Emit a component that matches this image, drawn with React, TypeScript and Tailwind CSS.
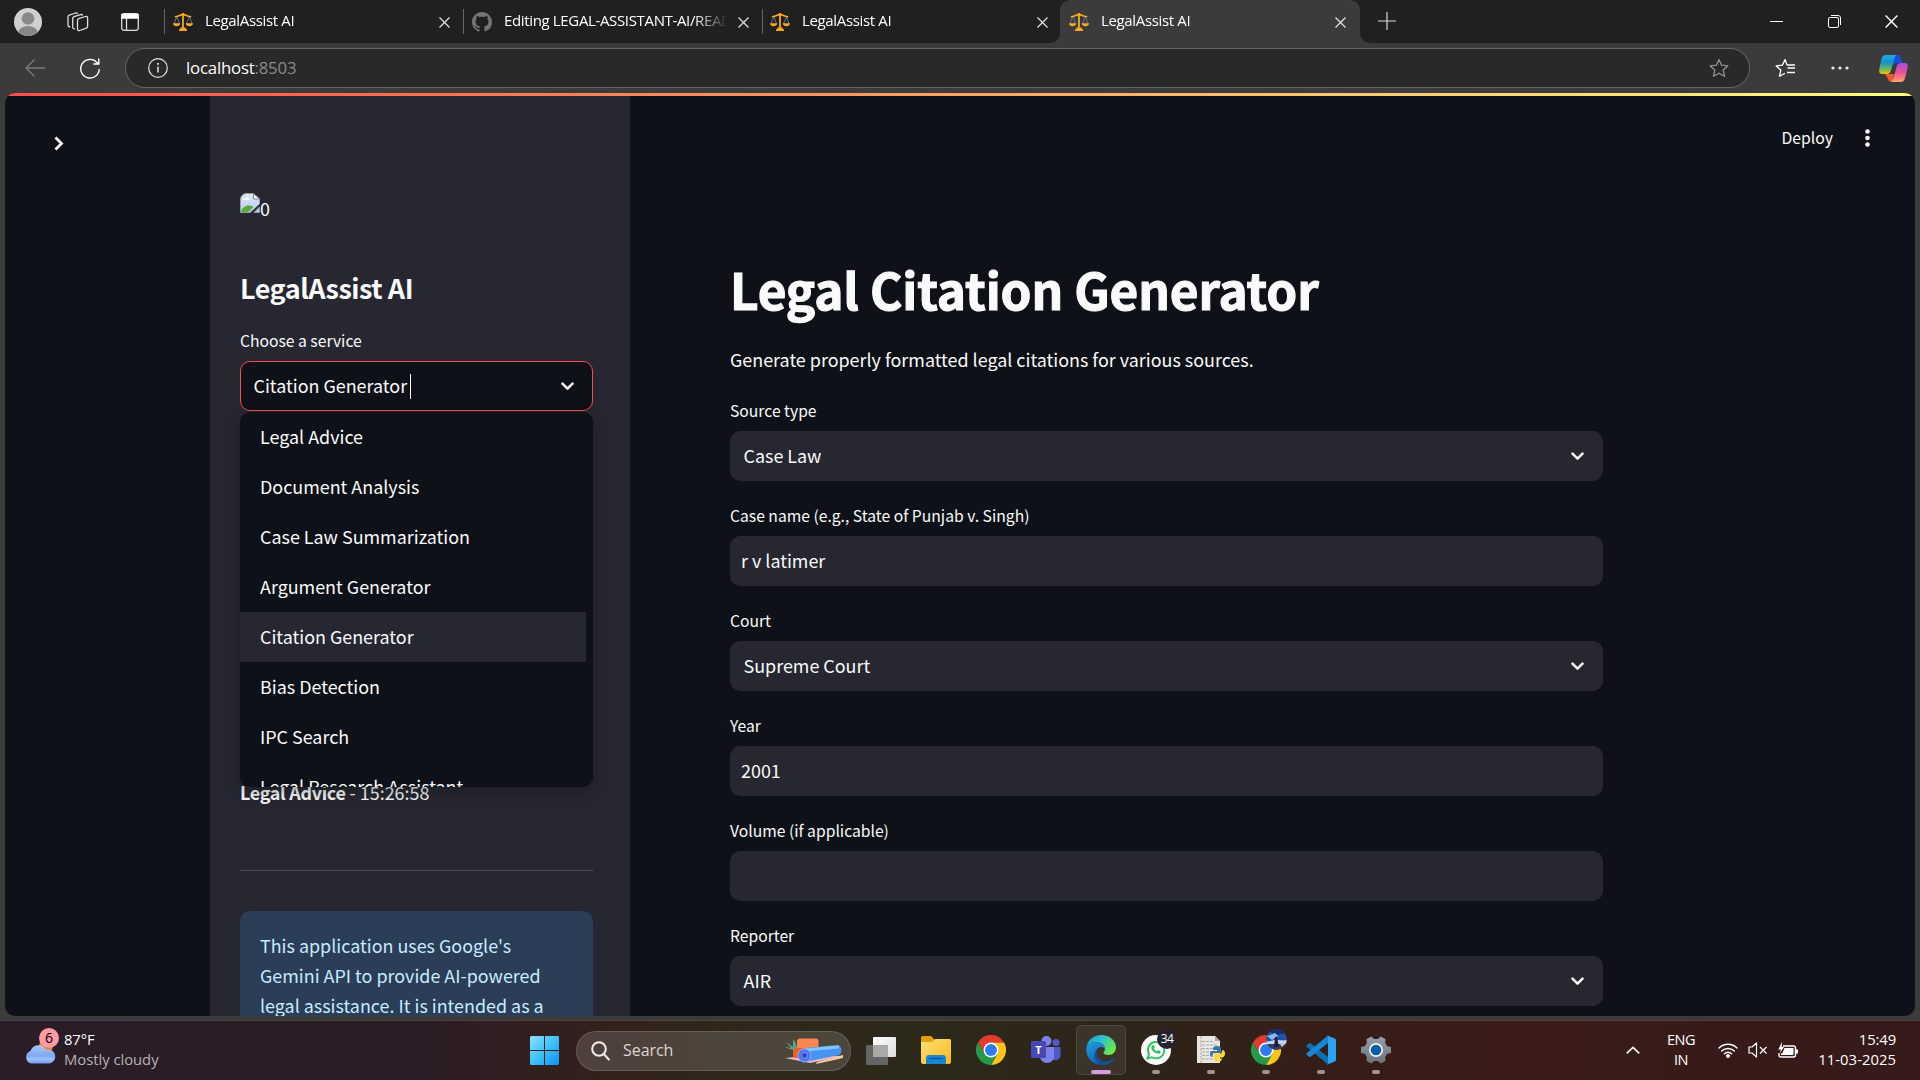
import React from "react";

const ui = "font-['Open_Sans','Noto_Sans',sans-serif]";
const source = "font-['Noto_Sans_CJK_SC','Noto_Sans',sans-serif]";

function Scales() {
  return (
    <svg width="20" height="20" viewBox="0 0 20 20" fill="none" className="shrink-0">
      <path d="M3.5 5 1 12M4 5l2.6 7M16.4 5 13.4 12M16.6 5 19 12" stroke="#5f7683" strokeWidth="1" />
      <path d="M2.5 4.6C5 4.6 7 2.6 10 2.6s5 2 7.5 2" stroke="#f9a825" strokeWidth="1.7" strokeLinecap="round" />
      <path d="M9.1 1.2h1.8v15H9.1z" fill="#f9a825" />
      <circle cx="10" cy="2.6" r="1.5" fill="#f9a825" />
      <path d="M0 11.3h7.2c0 2-1.6 3-3.6 3s-3.6-1-3.6-3ZM12.8 11.3H20c0 2-1.6 3-3.6 3s-3.6-1-3.6-3Z" fill="#f9a825" />
      <path d="M7.4 15.6h5.2l.2 1.6h1.2v1.8H6v-1.8h1.2Z" fill="#f9a825" />
    </svg>
  );
}

function GitHub() {
  return (
    <svg width="20" height="20" viewBox="0 0 16 16" fill="#737373" className="shrink-0">
      <path d="M8 0C3.58 0 0 3.58 0 8c0 3.54 2.29 6.53 5.47 7.59.4.07.55-.17.55-.38 0-.19-.01-.82-.01-1.49-2.01.37-2.53-.49-2.69-.94-.09-.23-.48-.94-.82-1.13-.28-.15-.68-.52-.01-.53.63-.01 1.08.58 1.23.82.72 1.21 1.87.87 2.33.66.07-.52.28-.87.51-1.07-1.78-.2-3.64-.89-3.64-3.95 0-.87.31-1.59.82-2.15-.08-.2-.36-1.02.08-2.12 0 0 .67-.21 2.2.82.64-.18 1.32-.27 2-.27s1.36.09 2 .27c1.53-1.04 2.2-.82 2.2-.82.44 1.1.16 1.92.08 2.12.51.56.82 1.27.82 2.15 0 3.07-1.87 3.75-3.65 3.95.29.25.54.73.54 1.48 0 1.07-.01 1.93-.01 2.2 0 .21.15.46.55.38A8.01 8.01 0 0 0 16 8c0-4.42-3.58-8-8-8Z" />
    </svg>
  );
}

function Cross({ size = 11, color = "#e4e4e4" }: { size?: number; color?: string }) {
  return (
    <svg width={size} height={size} viewBox="0 0 11 11" className="shrink-0">
      <path d="m.5.5 10 10M10.5.5l-10 10" stroke={color} strokeWidth="1.2" />
    </svg>
  );
}

function Tab({ title, icon, active }: { title: string; icon: React.ReactNode; active?: boolean }) {
  return (
    <div className={active ? "relative flex h-full w-[300px] items-center rounded-t-[10px] bg-[#3b3b3b]" : "relative flex h-full w-[299px] items-center"}>
      {!active && <span className="h-[25px] w-px bg-[#666]" />}
      <div className={active ? "flex w-[266px] items-center gap-3 pl-[9px]" : "flex w-[265px] items-center gap-3 pl-2"}>
        {icon}
        <span className="-mt-[3px] w-[224px] overflow-hidden whitespace-nowrap text-[15px] tracking-[-0.350px] text-white [mask-image:linear-gradient(to_right,#000_190px,transparent_224px)]">{title}</span>
      </div>
      <span className={active ? "ml-[9px] mt-px" : "ml-[8.500px] mt-px"}><Cross /></span>
      {active && (
        <>
          <svg className="absolute -left-[10px] bottom-0" width="10" height="10"><path d="M10 0v10H0A10 10 0 0 0 10 0Z" fill="#3b3b3b" /></svg>
          <svg className="absolute -right-[10px] bottom-0" width="10" height="10"><path d="M0 0v10h10A10 10 0 0 1 0 0Z" fill="#3b3b3b" /></svg>
        </>
      )}
    </div>
  );
}

function TabStrip() {
  return (
    <div className="flex h-[43px] shrink-0 items-center bg-[#202020]">
      <div className="flex w-[164px] items-center pl-[14px]">
        <svg width="28" height="28" viewBox="0 0 28 28">
          <defs><clipPath id="avatar"><circle cx="14" cy="14" r="14" /></clipPath></defs>
          <g clipPath="url(#avatar)">
            <path d="M0 0h28v28H0z" fill="#d2d0ce" />
            <circle cx="14" cy="10.500" r="6.200" fill="#8a8886" />
            <ellipse cx="14" cy="25" rx="10" ry="7" fill="#8a8886" />
          </g>
        </svg>
        <svg className="ml-[25px]" width="22" height="20" viewBox="0 0 22 20" fill="none" stroke="#ddd" strokeWidth="1.300">
          <path d="M10.500 8.400c0-.8.400-1.400 1.100-1.700l6.900-2.200c1.300-.4 2.100.2 2.100 1.400v8.400c0 .9-.4 1.500-1.200 1.800l-6.800 2.400c-1.200.4-2.100-.2-2.100-1.400Z" />
          <path d="M8 16.700c-1.400.3-2.300-.3-2.300-1.700V6.500c0-.9.500-1.500 1.300-1.800l6.400-2.100c1.100-.3 1.900 0 2.200.8" />
          <path d="M3.200 14.700C1.700 15 1 14.200 1 13V4.900c0-.9.400-1.500 1.200-1.800L8.600 1c1.100-.3 1.700 0 2.100.7" />
        </svg>
        <svg className="ml-8" width="18" height="18" viewBox="0 0 18 18" fill="none" stroke="#ddd" strokeWidth="1.300">
          <rect x=".7" y=".7" width="16.600" height="16.600" rx="2.500" />
          <path d="M1 1.500h16v3.500H1z" fill="#fff" stroke="#fff" />
          <path d="M5.500 5v12" />
        </svg>
      </div>
      <Tab title="LegalAssist AI" icon={<Scales />} />
      <Tab title="Editing LEGAL-ASSISTANT-AI/README.md" icon={<GitHub />} />
      <Tab title="LegalAssist AI" icon={<span className="-ml-px"><Scales /></span>} />
      <div className="-ml-px h-full"><Tab title="LegalAssist AI" icon={<Scales />} active /></div>
      <svg className="-mt-px ml-[18px]" width="18" height="18" viewBox="0 0 18 18"><path d="M9 0v18M0 9h18" stroke="#d8d8d8" strokeWidth="1.200" /></svg>
      <div className="ml-auto flex items-center gap-11 pr-[22px]">
        <span className="-ml-px mr-px h-px w-[13px] bg-white" />
        <svg width="13" height="13" viewBox="0 0 13 13" fill="none" stroke="#fff"><rect x=".5" y="2.500" width="10" height="10" rx="1.500" /><path d="M3 .5h7c1.500 0 2.500 1 2.500 2.500v7" /></svg>
        <Cross size={13} color="#fff" />
      </div>
    </div>
  );
}

const starPath = "m10 1.500 2.600 5.700 6.200.7-4.600 4.200 1.300 6.200L10 15.200l-5.500 3.100 1.300-6.200L1.200 7.900l6.200-.7Z";

function AddressBar() {
  return (
    <div className="flex h-[50px] shrink-0 items-center bg-[#3b3b3b]">
      <svg className="ml-[25px]" width="20" height="18" viewBox="0 0 20 18" fill="none" stroke="#7c7c7c" strokeWidth="1.300"><path d="M20 9H1M9.500.5 1 9l8.500 8.500" /></svg>
      <svg className="ml-[35px]" width="20" height="21" viewBox="0 0 20 21" fill="none" stroke="#fff" strokeWidth="1.400"><path d="M19.300 11A9.300 9.300 0 1 1 17 4.600L18.300 6M18.800.5V6h-5.500" /></svg>
      <div className="ml-[25px] flex h-10 w-[1625px] items-center rounded-full border border-[#666] bg-[#292929] pl-[22px] pr-5">
        <svg width="20" height="20" viewBox="0 0 20 20" fill="none" stroke="#e2e2e2" strokeWidth="1.200"><circle cx="10" cy="10" r="9.300" /><path d="M10 8.500v6" strokeWidth="1.500" /><path d="M10 5v1.800" strokeWidth="1.800" /></svg>
        <span className="-mt-px ml-[18px] text-[16.800px] tracking-[-0.200px] text-white">localhost<span className="text-[#8b8b8b]">:8503</span></span>
        <svg className="ml-auto" width="20" height="20" viewBox="0 0 20 20" fill="none" stroke="#939393" strokeWidth="1.300" strokeLinejoin="round"><path d={starPath} /></svg>
      </div>
      <svg className="ml-[25px]" width="21" height="20" viewBox="0 0 21 20" fill="none" stroke="#fff" strokeWidth="1.300" strokeLinejoin="round"><path d="M12 7 10 1.500 7.400 7.200l-6.200.7 4.600 4.200-1.300 6.200 5.500-3.100M12 7h2M12.500 10H20M13.500 7H20M12 14.500h8" /></svg>
      <svg className="ml-[35px]" width="18" height="4" viewBox="0 0 18 4" fill="#eee"><circle cx="2" cy="2" r="1.600" /><circle cx="9" cy="2" r="1.600" /><circle cx="16" cy="2" r="1.600" /></svg>
      <svg className="ml-[30px]" width="29" height="27" viewBox="0 0 29 27">
        <defs>
          <linearGradient id="cpA" x1="0" y1="0" x2="0" y2="1"><stop stopColor="#22a7e8" /><stop offset=".4" stopColor="#1494c4" /><stop offset=".75" stopColor="#6bb85e" /><stop offset="1" stopColor="#f4c400" /></linearGradient>
          <linearGradient id="cpB" x1="0" y1="0" x2="0" y2="1"><stop stopColor="#a44ce6" /><stop offset=".5" stopColor="#ef5292" /><stop offset="1" stopColor="#ffa468" /></linearGradient>
        </defs>
        <path d="M14 0h4.500c2 0 3 1.200 3.500 3l1.500 5h-6c-2 0-3 1-3.600 3Z" fill="#1750d8" />
        <path d="M6 19h9l-1 7.500h-2c-2 0-3-1.500-3.500-3.500Z" fill="#f2562e" />
        <path d="M6.500 0H18c-1.500.6-2.200 2-2.700 4l-3.500 12c-.7 2-1.800 3-3.800 3H3C.8 19-.3 17.300.2 14.500L2.500 4C3.200 1.300 4.500 0 6.500 0Z" fill="url(#cpA)" />
        <path d="M21.500 27H11c2-.4 3-2 3.500-4l3-11c.6-2.600 2-4 4.500-4h4c2.300 0 3.300 1.800 2.700 4.500L26 23c-.7 2.600-2 4-4.500 4Z" fill="url(#cpB)" />
      </svg>
    </div>
  );
}

function Chevron() {
  return (
    <svg className="ml-auto shrink-0" width="13" height="9" viewBox="0 0 13 9" fill="none" stroke="#fafafa" strokeWidth="2.500" strokeLinecap="round" strokeLinejoin="round"><path d="m1.500 1.700 5 5 5-5" /></svg>
  );
}

const services = ["Legal Advice", "Document Analysis", "Case Law Summarization", "Argument Generator", "Citation Generator", "Bias Detection", "IPC Search", "Legal Research Assistant"];

function BrokenImage() {
  return (
    <svg width="20" height="20" viewBox="0 0 20 20">
      <defs><linearGradient id="sky" x1="0" y1="0" x2="0" y2="1"><stop stopColor="#dce8fa" /><stop offset="1" stopColor="#b5cbf2" /></linearGradient></defs>
      <path d="M19.500 6v5L10 19.500H.5V7C.5 3 3 .5 7 .5h6.500Z" fill="url(#sky)" stroke="#9a9a9a" />
      <path d="M3 7c0-2 2-2 2.500-1C6 3.500 9 4 9 6c1 0 1 1 .5 1Z" fill="#fff" />
      <path d="M1 19c1-4 4-6.500 8-6.500 2 0 3 .5 4.500 1.500L8 19Z" fill="#56ab35" />
      <path d="M13.500.5V6h6Z" fill="#fff" stroke="#888" />
      <path d="M14 19.500h5.500V14Z" fill="#b5cbf2" stroke="#999" />
    </svg>
  );
}

function Sidebar() {
  return (
    <aside className="flex w-[420px] shrink-0 flex-col bg-[#262730] pl-[30px] pr-[37px] pt-[97px]">
      <div className="flex h-[30px] w-[353px] items-start">
        <BrokenImage />
        <span className="text-[17.920px] leading-[30px]">0</span>
      </div>
      <h2 className="mt-[47px] h-[36px] whitespace-nowrap text-[27px] font-semibold leading-[36px] tracking-[-0.480px]">LegalAssist AI</h2>
      <div className="mt-[22px] h-[26px] text-[15.680px] leading-[26px]">Choose a service</div>
      <div className="relative mt-[7px] w-[353px]">
        <div className="flex h-[50px] items-center rounded-[10px] border border-[#ff4b4b] bg-[#0e1117] pl-[12.500px] pr-[18.500px] text-[17.920px]">
          <span className="-mt-[2px]">Citation Generator</span>
          <span className="ml-[2.500px] h-[25px] w-px bg-white" />
          <Chevron />
        </div>
        <ul className="absolute left-0 top-[51px] z-10 h-[374.500px] w-full overflow-hidden rounded-[10px] bg-[#0e1117] shadow-[0_4px_16px_rgba(14,17,23,0.400)]">
          {services.map((s) => (
            <li key={s} className={s === "Citation Generator" ? "flex h-[50px] w-[346px] items-center bg-[#262730] pb-[2px] pl-5 text-[17.920px]" : "flex h-[50px] items-center pb-[2px] pl-5 text-[17.920px]"}>{s}</li>
          ))}
        </ul>
      </div>
      <p className="mt-[366px] h-[30px] text-[17.920px] leading-[30px]"><b className="font-semibold tracking-[-0.280px]">Legal Advice</b> - 15:26:58</p>
      <hr className="mt-[63px] w-[353px] border-[#4d4e56]" />
      <div className="mt-10 w-[353px] flex-1 whitespace-nowrap rounded-t-[10px] bg-[#2b3d57] px-5 pt-[19px] text-[17.920px] leading-[30px] text-[#c7ebff]">
        This application uses Google's<br />Gemini API to provide AI-powered<br />legal assistance. It is intended as a
      </div>
    </aside>
  );
}

const fields = [
  { label: "Source type", value: "Case Law", select: true },
  { label: "Case name (e.g., State of Punjab v. Singh)", value: "r v latimer", select: false },
  { label: "Court", value: "Supreme Court", select: true },
  { label: "Year", value: "2001", select: false },
  { label: "Volume (if applicable)", value: "", select: false },
  { label: "Reporter", value: "AIR", select: true },
];

function Main() {
  return (
    <main className="flex w-[1073px] shrink-0 flex-col pl-[100px] pr-[100px] pt-[153px]">
      <h1 className="h-[80px] whitespace-nowrap text-[49.500px] font-bold leading-[80px] tracking-[-0.120px] [-webkit-text-stroke:1.100px_#fafafa]">Legal Citation Generator</h1>
      <p className="mt-[15px] h-[30px] text-[17.920px] leading-[30px]">Generate properly formatted legal citations for various sources.</p>
      <div className="mt-6 flex flex-col gap-[22px]">
        {fields.map((f) => (
          <div key={f.label} className="flex flex-col gap-[7px]">
            <span className="h-[26px] text-[15.680px] leading-[26px]">{f.label}</span>
            <div className={f.select ? "flex h-[50px] items-center rounded-[10px] bg-[#262730] pl-[13.500px] pr-[19.500px] text-[17.920px]" : "flex h-[50px] items-center rounded-[10px] bg-[#262730] pl-[11px] pr-5 text-[17.920px]"}>
              <span className="-mt-[2px]">{f.value}</span>
              {f.select && <Chevron />}
            </div>
          </div>
        ))}
      </div>
    </main>
  );
}

function Page() {
  return (
    <div className="h-[927px] shrink-0 bg-[#3b3b3b] px-[5px] pb-[4px]">
      <div className={`${source} flex h-[923px] flex-col overflow-hidden rounded-[10px] bg-[#0e1117] text-[#fafafa]`}>
        <div className="h-[3px] shrink-0 bg-[linear-gradient(90deg,#ff4b4b,#fffd80)]" />
        <div className="flex min-h-0 flex-1">
          <div className="w-[205px] shrink-0 pl-[48.500px] pt-[39.500px]">
            <svg width="10" height="15" viewBox="0 0 10 15" fill="none" stroke="#fafafa" strokeWidth="2.800"><path d="m1.500 1.500 6 6-6 6" /></svg>
          </div>
          <Sidebar />
          <Main />
          <div className="flex h-[84px] flex-1 items-center justify-end gap-[32px] pr-[45px]">
            <span className="text-[15.750px]">Deploy</span>
            <svg width="5" height="18" viewBox="0 0 5 18" fill="#fafafa"><circle cx="2.500" cy="2.500" r="2.300" /><circle cx="2.500" cy="9" r="2.300" /><circle cx="2.500" cy="15.500" r="2.300" /></svg>
          </div>
        </div>
      </div>
    </div>
  );
}

function Chrome() {
  return (
    <svg width="30" height="30" viewBox="0 0 48 48">
      <path d="M3.200 12A24 24 0 0 1 44.800 12H24L13.600 30Z" fill="#e33b2e" />
      <path d="M44.800 12A24 24 0 0 1 24 48L34.400 30 24 12Z" fill="#fdc21b" />
      <path d="M24 48A24 24 0 0 1 3.200 12l10.400 18h20.800Z" fill="#239a48" />
      <circle cx="24" cy="24" r="12" fill="#fff" />
      <circle cx="24" cy="24" r="9.500" fill="#2b7cee" />
    </svg>
  );
}

function Edge() {
  return (
    <svg width="30" height="30" viewBox="0 0 30 30">
      <defs>
        <linearGradient id="edA" x1="0" y1="0" x2="1" y2=".5"><stop stopColor="#1997d8" /><stop offset=".5" stopColor="#2bc2cd" /><stop offset="1" stopColor="#6ae84a" /></linearGradient>
        <linearGradient id="edB" x1="0" y1="0" x2=".4" y2="1"><stop stopColor="#1da2e0" /><stop offset="1" stopColor="#0d63b8" /></linearGradient>
      </defs>
      <path d="M.4 13C1.500 5 7.500 0 15 0c8.500 0 15 5.500 15 12.500 0 4.500-3.300 7.500-7.500 7.500-3.500 0-5.300-1.300-5-2.500.3-.8 1.400-1.500 1.400-3.500C18.900 10 15 7 10 7 5.500 7 2 9 .4 13Z" fill="url(#edA)" />
      <path d="M.3 15C0 10 4 7 9.500 7c5.500 0 9 3 9.300 7-1-1.500-2.300-2-4-2-3 0-4.800 3-4.800 6.500 0 5 4 9 8.500 11.100C9 31 .5 25 .3 15Z" fill="url(#edB)" />
      <path d="M12 13c-4 6 .5 14 8 13.500 3.500-.2 5.800-2 7.800-3.700.6-.4 1 .2.700.8C26 28 21 30.300 17 29.900 10 29 7.500 23 8.500 18.500 9 16 10.500 14 12 13Z" fill="#124f9c" />
    </svg>
  );
}

function AppSlot({ children, running, active }: { children: React.ReactNode; running?: boolean; active?: boolean }) {
  return (
    <div className={active ? "relative flex h-[50px] w-[50px] items-center justify-center rounded-[5px] border border-white/10 bg-white/[0.070]" : "relative flex h-[50px] w-[50px] items-center justify-center"}>
      {children}
      {running && <span className="absolute bottom-px h-1 w-2 rounded-full bg-[#9d9390]" />}
      {active && <span className="absolute bottom-0 h-1 w-5 rounded-full bg-[#d99be0]" />}
    </div>
  );
}

function Taskbar() {
  return (
    <div className="flex h-[60px] shrink-0 items-center border-t border-white/15 bg-[linear-gradient(90deg,#2a1d27_0px,#2c1d26_420px,#32201c_560px,#30281a_760px,#2c291a_920px,#2e2419_1150px,#371d17_1350px,#3a1b17_1500px,#361a19_1920px)]">
      <div className="flex w-[525px] items-center pl-[25px]">
        <div className="relative -mt-[10px] h-[36px] w-[34px]">
          <svg width="34" height="36" viewBox="0 0 34 36">
            <defs><linearGradient id="cloud" x1="0" y1="0" x2="0" y2="1"><stop stopColor="#a9c8fa" /><stop offset=".6" stopColor="#7fa7f0" /><stop offset=".75" stopColor="#a0c5fb" /><stop offset="1" stopColor="#6d9af0" /></linearGradient></defs>
            <circle cx="21" cy="18" r="7" fill="#f57c14" />
            <path d="M6.500 35.500A6.500 6.500 0 0 1 5.500 23 8.500 8.500 0 0 1 21 21.500a7 7 0 0 1 4 14Z" fill="url(#cloud)" />
          </svg>
          <span className="absolute left-[14px] top-0 flex h-5 w-5 items-center justify-center rounded-full bg-[#ff99a4] text-[14px] text-black">6</span>
        </div>
        <div className="-mt-1 ml-[5px] flex flex-col text-[14.800px] leading-5 tracking-[-0.100px]"><span className="text-white">87°F</span><span className="tracking-[-0.020px] text-[#b8b1b5]">Mostly cloudy</span></div>
      </div>
      <svg className="ml-[5px]" width="29" height="29" viewBox="0 0 29 29">
        <defs><linearGradient id="win" gradientUnits="userSpaceOnUse" x1="0" y1="0" x2="29" y2="29"><stop stopColor="#8ae0ff" /><stop offset=".5" stopColor="#3fc2fb" /><stop offset="1" stopColor="#0e90fb" /></linearGradient></defs>
        <path d="M1 0h13v14H0V1ZM15 0h13l1 1v13H15ZM0 15h14v14H1l-1-1ZM15 15h14v13l-1 1H15Z" fill="url(#win)" />
      </svg>
      <div className="ml-[17px] flex h-10 w-[275px] items-center rounded-full border border-white/15 bg-white/[0.140] pl-[14px]">
        <svg width="19" height="20" viewBox="0 0 19 20" fill="none" stroke="#eee" strokeWidth="2"><circle cx="8" cy="8" r="6.800" /><path d="m12.800 13 5 5.500" strokeLinecap="round" /></svg>
        <span className="-mt-px ml-[13px] text-[16px] tracking-[-0.050px] text-[#dcd6d2]">Search</span>
        <svg className="ml-auto mr-[6px]" width="60" height="28" viewBox="0 0 60 28">
          <path d="m1 21 30-3 28 1-33 7Z" fill="#f3b6c8" />
          <path d="M33 25 59 18v3l-27 6Z" fill="#f5cfa4" />
          <path d="M11 14C9 12 3 12 1 10l6 1-5-6 7 5 0-8c3 3 4 7 4 11" fill="#56a48a" />
          <path d="M13 4c0-1.500 1-2.500 2.500-2.500H32c1.500 0 2.500 1 2.500 2.500v8H13Z" fill="#fb8553" />
          <path d="M9 13c0-1 1-2 2-2h11v10H11c-1 0-2-1-2-2Z" fill="#e9632f" />
          <path d="m20 11 33-3c5 0 6 8 2 10l-34 7Z" fill="#4594f4" />
          <path d="m20 13 35-3" stroke="#82c3ff" strokeWidth="3" />
          <circle cx="20.500" cy="18.500" r="6.500" fill="#4d73ed" stroke="#8dadff" />
          <circle cx="20.500" cy="18.500" r="3" fill="#2a4abf" stroke="#7ea3ff" />
        </svg>
      </div>
      <svg className="ml-[15px]" width="30" height="28" viewBox="0 0 30 28">
        <defs><linearGradient id="tv" x1="0" y1="0" x2="1" y2="1"><stop stopColor="#fff" /><stop offset="1" stopColor="#dcdcdc" /></linearGradient></defs>
        <rect y="8" width="22" height="20" rx="1" fill="#656565" /><rect x="7" width="23" height="20" rx="1" fill="url(#tv)" /><path d="M7 8h15v12H7Z" fill="#aaa9a8" />
      </svg>
      <div className="-mt-px ml-[15px] flex items-center gap-[5px]">
        <AppSlot>
          <svg width="30" height="28" viewBox="0 0 30 28">
            <defs><linearGradient id="fold" x1="0" y1="0" x2="1" y2="1"><stop stopColor="#ffe07a" /><stop offset="1" stopColor="#f8b818" /></linearGradient></defs>
            <path d="M0 2c0-1 .7-2 2-2h8l3 3v4H0Z" fill="#e3a008" /><path d="M0 6h11l3-3h15l1 1v22.500L28.500 28H1.500L0 26.500Z" fill="url(#fold)" /><path d="M5 28v-6c0-2 1-3 3-3h14c2 0 3 1 3 3v6Z" fill="#1687d7" /><path d="M8 22.500h14" stroke="#0b559f" strokeWidth="1.300" />
          </svg>
        </AppSlot>
        <AppSlot><Chrome /></AppSlot>
        <AppSlot>
          <span className="relative">
            <svg width="30" height="28" viewBox="0 0 30 28">
              <circle cx="25" cy="6.500" r="3.500" fill="#5059c9" /><circle cx="15.500" cy="5" r="5" fill="#7b83eb" />
              <path d="M20 11h9.500v8c0 3-2 5-5 5H20Z" fill="#5059c9" /><path d="M9 11h14v9c0 4-3 7-7 7s-7-3-7-7Z" fill="#7b83eb" />
              <rect y="5" width="15" height="17" rx="1.500" fill="#4649b3" />
            </svg>
            <span className="absolute left-0 top-[5px] w-[15px] text-center text-[11px] font-bold leading-[17px] text-white">T</span>
          </span>
        </AppSlot>
        <AppSlot active><Edge /></AppSlot>
        <AppSlot running>
          <span className="relative">
            <svg width="30" height="30" viewBox="0 0 30 30" fill="none">
              <circle cx="15" cy="15" r="15" fill="#fff" />
              <path d="m6.500 23.500 1.400-4.500A8.200 8.200 0 1 1 11 22.200Z" stroke="#2bc35c" strokeWidth="1.900" />
              <path d="M11.500 10.300c.8-.6 1.500-.4 1.700.2l.6 1.600-.8 1.300c.8 1.500 1.800 2.300 3.200 2.900l1.200-1.200 2 .9c.4.300.3 1.200-.2 1.900-1.500 1.500-3.500.9-5.500-.3-1.800-1.300-3.200-3-3.400-4.600 0-1.200.5-2.100 1.200-2.700Z" fill="#2bc35c" />
            </svg>
            <span className="absolute -right-[6px] -top-[6px] flex h-5 w-5 items-center justify-center rounded-full bg-[#24232e] text-[12px] leading-none tracking-[-0.500px] text-white">34</span>
          </span>
        </AppSlot>
        <AppSlot running>
          <svg width="28" height="30" viewBox="0 0 28 30">
            <path d="M0 1h18l5 5v22H0Z" fill="#e8e6e3" /><path d="m18 1 5 5h-5Z" fill="#aaa" />
            <path d="M4 1v27M5 6.500h11M5 10h15M5 13.500h14M5 17h10M5 20.500h10M5 24h12" stroke="#aaa" strokeWidth="1" strokeDasharray="3 1" />
            <path d="M16 15c0-3 1-4 4-4s4 1 4 3v4h-7c-1 0-1.500 1-1.500 4-2 0-2.500-1.500-2.500-3.500S14 16 16 16h4v-1Z" fill="#3876a8" />
            <path d="M25 15c2 0 3 1.500 3 3.500s-1 4-3 4h-4v1h4c0 2-1 3-4 3s-4-1-4-3v-3c0-1.500 1-2 2-2h4.500c1 0 1.500-1 1.500-3.500Z" fill="#ffd33f" />
          </svg>
        </AppSlot>
        <AppSlot running>
          <span className="relative">
            <Chrome />
            <svg className="absolute -right-[6px] -top-[6px]" width="21" height="21" viewBox="0 0 21 21">
              <defs><clipPath id="profile"><circle cx="10.500" cy="10.500" r="10.300" /></clipPath></defs>
              <g clipPath="url(#profile)"><path d="M0 0h21v21H0z" fill="#2451a8" /><path d="M0 0h21v4L9 6Z" fill="#142d75" /><path d="m1 7 8-3 3 3-6 4Z" fill="#8fb3ec" /><path d="M0 12c4 1 5-1 10-1s7 1 11 0v4l-8 2-13-1Z" fill="#c9d5ef" /><path d="M0 15h21v6H0Z" fill="#3a3b60" /><path d="M9 8h2l2 10H8Z" fill="#211e44" /><path d="m13 14 6 1-3 3Z" fill="#cdbdc8" /></g>
            </svg>
          </span>
        </AppSlot>
        <AppSlot running>
          <svg width="30" height="30" viewBox="0 0 30 30">
            <path d="M.6 10.300 3 8.300c.5-.4 1-.4 1.600 0L22 22v7.500L.6 11.700c-.5-.5-.5-1 0-1.400Z" fill="#0c6fb8" />
            <path d="m.6 19.700 2.400 2c.5.400 1 .4 1.600 0L22 8V.5L.6 18.300c-.5.500-.5 1 0 1.400Z" fill="#1687d6" />
            <path d="M20.500 0 28.600 3.500c.9.400 1.400 1 1.400 2v19c0 1-.5 1.600-1.400 2L20.500 30c1-.4 1.500-1.200 1.500-2.500v-25C22 1.200 21.500.4 20.500 0Z" fill="#2aa3f2" />
          </svg>
        </AppSlot>
        <AppSlot running>
          <svg width="30" height="30" viewBox="0 0 30 30">
            <defs><linearGradient id="gear" x1="0" y1="0" x2="0" y2="1"><stop stopColor="#97a0a8" /><stop offset="1" stopColor="#6a737c" /></linearGradient></defs>
            <path d="M10.500 1.500 13 4h4l2.500-2.500 5 2.500-.3 4 2 3.200L30 12v6l-3.800.8-2 3.200.3 4-5 2.500L17 26h-4l-2.500 2.500-5-2.500.3-4-2-3.200L0 18v-6l3.800-.8 2-3.200-.3-4Z" fill="url(#gear)" />
            <circle cx="15" cy="15" r="7" fill="#f2f2f2" /><circle cx="15" cy="15" r="5.300" fill="#0c5da5" />
          </svg>
        </AppSlot>
      </div>
      <div className="-mt-px ml-auto flex items-center pr-6">
        <svg width="14" height="8" viewBox="0 0 14 8" fill="none" stroke="#fff" strokeWidth="1.600"><path d="m.7 7.300 6.300-6 6.300 6" /></svg>
        <div className="ml-[26px] flex w-[30px] flex-col items-center text-[14.500px] leading-5 tracking-[-0.500px] text-white"><span>ENG</span><span>IN</span></div>
        <svg className="ml-[22px]" width="20" height="16" viewBox="0 0 20 16" fill="none" stroke="#fff" strokeWidth="1.500" strokeLinecap="round"><path d="M1 6a12.700 12.700 0 0 1 18 0M3.700 9a9 9 0 0 1 12.600 0M6.500 11.800a5 5 0 0 1 7 0" /><circle cx="10" cy="14" r="1.200" fill="#fff" /></svg>
        <svg className="ml-[10px]" width="20" height="16" viewBox="0 0 20 16" fill="none" stroke="#fff" strokeWidth="1.200" strokeLinejoin="round"><path d="M8.500 1v14L4 11H1V5h3Z" /><path d="m12 5 6.500 6.500M18.500 5 12 11.500" /></svg>
        <svg className="ml-[10px]" width="20" height="17" viewBox="0 0 20 17"><path d="M5 4h10.500c1.400 0 2 .7 2 2v7c0 1.300-.6 2-2 2H3c-1.400 0-2-.7-2-2v-2" fill="none" stroke="#fff" strokeWidth="1.400" /><path d="M6.500 6H15.500v7H3v-1.500l1.500-.5ZM18 7.500h2v4h-2ZM4 0 .3 7.500h2.500L2 11l4-6H3.800Z" fill="#fff" /></svg>
        <div className="-mt-[2px] ml-[18px] flex w-[80px] flex-col items-end whitespace-nowrap text-[14.800px] leading-5 tracking-[0.050px] text-white"><span className="tracking-[-0.100px]">15:49</span><span>11-03-2025</span></div>
      </div>
    </div>
  );
}

export default function App() {
  return (
    <div className={`${ui} flex h-[1080px] w-[1920px] flex-col overflow-hidden bg-[#202020]`}>
      <TabStrip />
      <AddressBar />
      <Page />
      <Taskbar />
    </div>
  );
}
